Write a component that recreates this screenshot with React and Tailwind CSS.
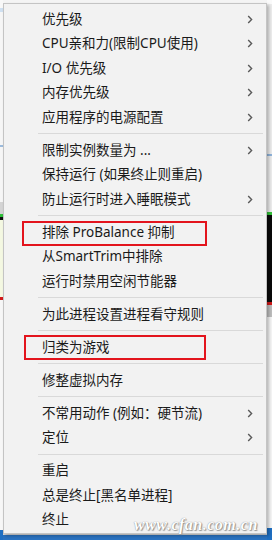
import React from 'react';

const groups = [
  [
    { label: '优先级', sub: true },
    { label: 'CPU亲和力(限制CPU使用)', sub: true },
    { label: 'I/O 优先级', sub: true },
    { label: '内存优先级', sub: true },
    { label: '应用程序的电源配置', sub: true },
  ],
  [
    { label: '限制实例数量为 ...', sub: true },
    { label: '保持运行 (如果终止则重启)' },
    { label: '防止运行时进入睡眠模式', sub: true },
  ],
  [
    { label: '排除 ProBalance 抑制', mark: 'a' },
    { label: '从SmartTrim中排除' },
    { label: '运行时禁用空闲节能器' },
  ],
  [{ label: '为此进程设置进程看守规则' }],
  [{ label: '归类为游戏', mark: 'b' }],
  [{ label: '修整虚拟内存' }],
  [
    { label: '不常用动作 (例如：硬节流)', sub: true },
    { label: '定位', sub: true },
  ],
  [
    { label: '重启' },
    { label: '总是终止[黑名单进程]' },
    { label: '终止' },
  ],
];

function Chevron() {
  return (
    <svg width="6" height="9" viewBox="0 0 6 9" className="shrink-0">
      <polyline points="1.2,1 4.6,4.5 1.2,8" fill="none" stroke="#5a5a5a" strokeWidth="1.4" />
    </svg>
  );
}

function Item({ item }) {
  return (
    <div className="relative flex h-[24.5px] items-center pl-[38px] pr-[13px]">
      <span className="flex-1 whitespace-nowrap">{item.label}</span>
      {item.sub && <Chevron />}
      {/* red highlight boxes drawn over the screenshot */}
      {item.mark === 'a' && (
        <div className="absolute left-[18px] top-[1px] h-[25px] w-[185px] border-2 border-[#e3141d]" />
      )}
      {item.mark === 'b' && (
        <div className="absolute left-[20px] top-0 h-[25px] w-[182px] border-2 border-[#e3141d]" />
      )}
    </div>
  );
}

export default function App() {
  return (
    <div className="relative h-[540px] w-[272px] overflow-hidden bg-[#f4f4f4]">
      {/* desktop behind the menu */}
      <div className="flex h-full w-full">
        <div className="flex w-[3px] flex-col">
          <div className="h-[8px] bg-[#f8f8f8]" />
          <div className="h-[4px] bg-[#cfe0f1]" />
          <div className="h-[133px] bg-[#f6f6f6]" />
          <div className="h-[2px] bg-[#9cbbdc]" />
          <div className="h-[55px] bg-[#f6f6f6]" />
          <div className="h-[12px] bg-[#d4d4d4]" />
          <div className="h-[3px] bg-[#2fbf3a]" />
          <div className="h-[3px] bg-[#111]" />
          <div className="h-[77px] bg-[#f4f8e2]" />
          <div className="h-[3px] bg-[#d21a1a]" />
          <div className="h-[230px] bg-[#f7f7f7]" />
          <div className="flex-1 bg-[#1f6fc2]" />
        </div>
        <div className="flex flex-1 flex-col">
          <div className="flex-1" />
          <div className="h-[3px] bg-[#dcdcdc]" />
          <div className="h-[5px] bg-[#2a72c0]" />
        </div>
        <div className="flex w-[5px] flex-col">
          <div className="h-[4px] bg-[#fafafa]" />
          <div className="h-[150px] bg-[#ececec]" />
          <div className="h-[2px] bg-[#8fb3da]" />
          <div className="h-[56px] bg-[#ececec]" />
          <div className="h-[3px] bg-[#33c23a]" />
          <div className="h-[87px] bg-[#0a0a0a]" />
          <div className="h-[3px] bg-[#d01818]" />
          <div className="h-[12px] bg-[#bdbdbd]" />
          <div className="h-[211px] bg-[#f5f5f5]" />
          <div className="flex-1 bg-[#1f6fc2]" />
        </div>
      </div>

      {/* context menu */}
      <div
        className="absolute left-[3px] top-[3px] w-[264px] border border-[#c4c4c4] bg-[#f2f2f2] pt-[3px] pb-[1px] text-[13.5px] leading-none text-[#1a1a1a] shadow-[2px_2px_3px_rgba(0,0,0,0.25)]"
        style={{ fontFamily: '"Noto Sans", "Noto Sans CJK SC", sans-serif' }}
      >
        {groups.map((group, gi) => (
          <div key={gi}>
            {gi > 0 && (
              <div className="flex h-[8.5px] items-center pl-[34px] pr-[3px]">
                <div className="h-px flex-1 bg-[#d9d9d9]" />
              </div>
            )}
            {group.map((item) => (
              <Item key={item.label} item={item} />
            ))}
          </div>
        ))}
      </div>

      {/* watermark */}
      <div
        className="absolute left-[134px] top-[513px] whitespace-nowrap text-[16px] font-bold italic tracking-[0.5px] text-white [text-shadow:0_0_1px_#777,1px_1px_1px_#999]"
        style={{ fontFamily: '"Liberation Serif", serif' }}
      >
        www.cfan.com.cn
      </div>
    </div>
  );
}
